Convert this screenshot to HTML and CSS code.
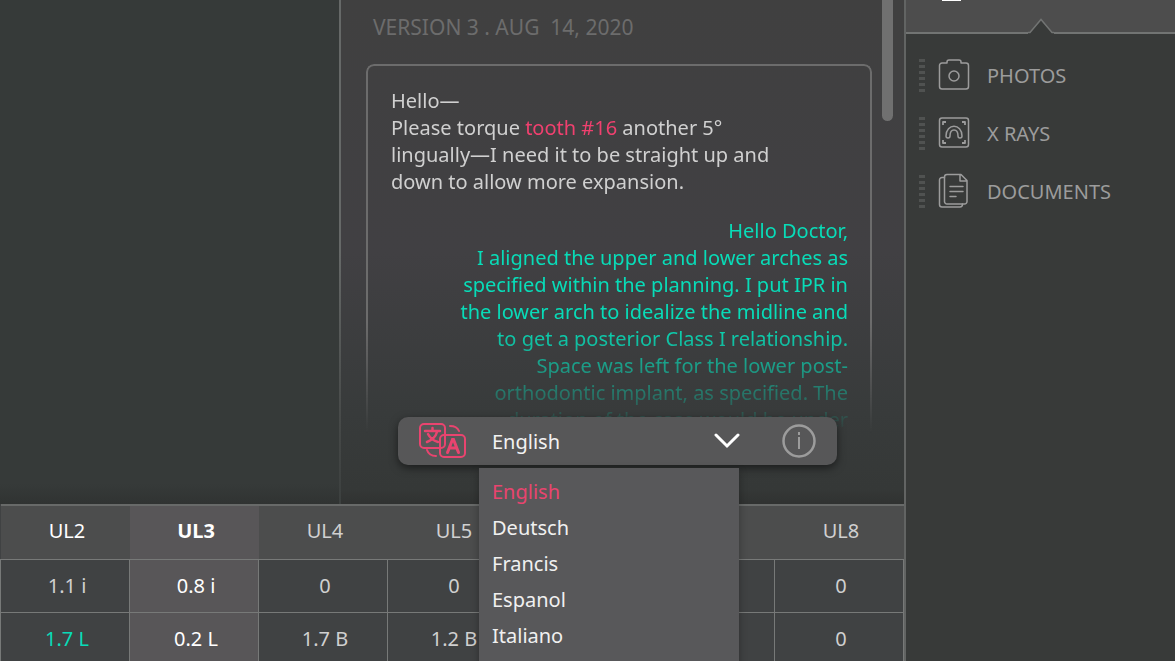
FILE: index.html
```html
<!DOCTYPE html>
<html lang="en">
<head>
  <meta charset="UTF-8" />
  <meta name="viewport" content="width=device-width, initial-scale=1.0"/>
  <title>Treatment Planning</title>
  <link rel="stylesheet" href="styles.css">
</head>
<body>

  <main class="main">
    <div class="workspace">
      <div class="viewer"></div>

      <section class="notes">
        <div class="notes-body">
          <h2>VERSION 3 . AUG &nbsp;14, 2020</h2>
          <div class="thread">
            <p class="message">Hello—<br>
              Please torque <a href="#tooth16">tooth #16</a> another 5°<br>
              lingually—I need it to be straight up and<br>
              down to allow more expansion.</p>
            <p class="message reply">Hello Doctor,<br>
              I aligned the upper and lower arches as<br>
              specified within the planning. I put IPR in<br>
              the lower arch to idealize the midline and<br>
              to get a posterior Class I relationship.<br>
              Space was left for the lower post-<br>
              orthodontic implant, as specified. The<br>
              duration of the case would be under</p>
          </div>
        </div>
        <div class="scroll-thumb"></div>

        <div class="language-bar">
          <label class="translate-icon" for="language">
            <svg width="48" height="36" viewBox="0 0 48 36" fill="none" stroke="currentColor" stroke-width="2" stroke-linecap="round" aria-hidden="true">
              <path d="M20 25H5a4 4 0 0 1-4-4V5a4 4 0 0 1 4-4h17a4 4 0 0 1 4 4v7"/>
              <rect x="21" y="12" width="25" height="22" rx="4"/>
              <path d="M26 12v9a4 4 0 0 1-4 4h-2M31 3q7 0 9 5M8 27q2 6 9 6"/>
              <path d="M6 8h15M13.500 5v3M8 19q8-3 10-10M9 11q3 6 10 8" stroke-width="2.500"/>
              <path d="M28.500 29.500l5-13h1l5 13M30.500 25h7" stroke-width="3"/>
            </svg>
          </label>
          <select id="language" aria-label="Language">
            <option>English</option>
            <option>Deutsch</option>
            <option>Francis</option>
            <option>Espanol</option>
            <option>Italiano</option>
          </select>
          <svg class="chevron" width="26" height="16" viewBox="0 0 26 16" fill="none" stroke="currentColor" stroke-width="3" stroke-linecap="round" aria-hidden="true">
            <path d="M2 2l11 11L24 2"/>
          </svg>
          <button class="info" aria-label="Information">
            <svg width="34" height="34" viewBox="0 0 34 34" fill="none" stroke="currentColor" stroke-width="2">
              <circle cx="17" cy="17" r="15.500" stroke-width="2.500"/>
              <path d="M17 13v12M17 8v3"/>
            </svg>
          </button>

          <ul class="language-menu" id="languageMenu">
            <li><button class="selected">English</button></li>
            <li><button>Deutsch</button></li>
            <li><button>Francis</button></li>
            <li><button>Espanol</button></li>
            <li><button>Italiano</button></li>
          </ul>
        </div>
      </section>
    </div>

    <table class="teeth">
      <thead>
        <tr>
          <th class="bright">UL2</th>
          <th class="active">UL3</th>
          <th>UL4</th>
          <th>UL5</th>
          <th></th>
          <th></th>
          <th>UL8</th>
        </tr>
      </thead>
      <tbody>
        <tr>
          <td>1.1 i</td>
          <td class="active">0.8 i</td>
          <td>0</td>
          <td>0</td>
          <td></td>
          <td></td>
          <td>0</td>
        </tr>
        <tr>
          <td class="changed">1.7 L</td>
          <td class="active">0.2 L</td>
          <td>1.7 B</td>
          <td>1.2 B</td>
          <td></td>
          <td></td>
          <td>0</td>
        </tr>
      </tbody>
    </table>
  </main>

  <aside class="sidebar">
    <div class="sidebar-top">
      <div class="tab-mark"></div>
      <svg class="notch" width="26" height="16" viewBox="0 0 26 16" aria-hidden="true">
        <path d="M0 16V14.500H2L13 1.500L24 14.500H26V16Z" fill="#383a39"/>
        <path d="M0 14.500H2L13 1.500L24 14.500H26" fill="none" stroke="#727473" stroke-width="1.500"/>
      </svg>
    </div>
    <nav class="files">
      <a href="#photos">
        <span class="grip"></span>
        <svg width="32" height="36" viewBox="0 0 32 36" fill="none" stroke="currentColor" stroke-width="1.500" stroke-linejoin="round">
          <path d="M9 6V5a2 2 0 0 1 2-2h10a2 2 0 0 1 2 2v1h5a2.500 2.500 0 0 1 2.500 2.500v21A2.500 2.500 0 0 1 28 32H4a2.500 2.500 0 0 1-2.500-2.500v-21A2.500 2.500 0 0 1 4 6z"/>
          <circle cx="16" cy="19" r="5"/>
        </svg>
        PHOTOS
      </a>
      <a href="#xrays">
        <span class="grip"></span>
        <svg width="32" height="36" viewBox="0 0 32 36" fill="none" stroke="currentColor" stroke-width="1.500" stroke-linejoin="round">
          <rect x="1.500" y="3" width="29" height="29" rx="2.500"/>
          <path d="M5 10V7h3M24 7h3v3M27 25v3h-3M8 28H5v-3" stroke-width="1.800"/>
          <path d="M8 21C8 8 24 8 24 21q0 2-2 2t-2-2C20 13 12 13 12 21q0 2-2 2t-2-2z"/>
        </svg>
        X RAYS
      </a>
      <a href="#documents">
        <span class="grip"></span>
        <svg width="32" height="36" viewBox="0 0 32 36" fill="none" stroke="currentColor" stroke-width="1.500" stroke-linejoin="round" stroke-linecap="round">
          <path d="M9 1.500h14l6 6v21A2.500 2.500 0 0 1 26.500 31H9a2.500 2.500 0 0 1-2.500-2.500V4A2.500 2.500 0 0 1 9 1.500zM22 1.500V8h7"/>
          <path d="M6.500 4.500H4A2.500 2.500 0 0 0 1.500 7v24.500A2.500 2.500 0 0 0 4 34h18q2.500 0 2.500-3"/>
          <path d="M12 13.500h13M12 18.500h13M12 23.500h6"/>
        </svg>
        DOCUMENTS
      </a>
    </nav>
  </aside>

  <script>
    const language = document.getElementById("language");
    const items = document.querySelectorAll("#languageMenu button");

    items.forEach(item => {
      item.onclick = () => {
        language.value = item.innerText;
        items.forEach(i => i.classList.toggle("selected", i === item));
      };
    });
  </script>

</body>
</html>
```
FILE: styles.css
```css
* {
  box-sizing: border-box;
}

body {
  display: flex;
  height: 100vh;
  margin: 0;
  overflow: hidden;
  background: #363a39;
  color: #d0d0d0;
  font-family: "Noto Sans", sans-serif;
  font-size: 20px;
  line-height: 27px;
}

button, select {
  font: inherit;
  color: inherit;
  background: none;
  border: none;
  padding: 0;
  cursor: pointer;
}

.main {
  flex: 1;
  min-width: 0;
  display: flex;
  flex-direction: column;
}

.workspace {
  flex: 1;
  min-height: 0;
  display: grid;
  grid-template-columns: 3fr 5fr;
  background: linear-gradient(#363a39 96%, #303332);
}

.notes {
  position: relative;
  display: flex;
  align-items: flex-start;
  gap: 10px;
  padding: 0 11px 0 25px;
  border-left: 2px solid;
  border-image: linear-gradient(#666968 50%, #454847 85%, #3c403f) 1;
  background: linear-gradient(#404040, #414043 50%, #383b3b 82%, #353837 97%, #303231);
}

.notes-body {
  flex: 1;
  min-width: 0;
}

.notes h2 {
  margin: 14px 0 23px 7px;
  color: #6c6c6c;
  font-size: 21px;
  font-weight: normal;
  line-height: 27px;
}

.thread {
  padding: 21px 22px 0 23px;
  border: 2px solid #6c6c6c;
  border-bottom: none;
  border-radius: 8px 8px 0 0;
  -webkit-mask-image: linear-gradient(#000 70%, transparent);
  mask-image: linear-gradient(#000 70%, transparent);
}

.message {
  margin: 0 0 22px;
  white-space: nowrap;
}

.message a {
  color: #f0406f;
  text-decoration: none;
}

.reply {
  margin: 0;
  color: #08dcb8;
  text-align: right;
}

.scroll-thumb {
  width: 11px;
  height: 121px;
  border-radius: 0 0 6px 6px;
  background: #707070;
}

.language-bar {
  position: absolute;
  left: 57px;
  right: 67px;
  bottom: 39px;
  z-index: 1;
  display: flex;
  align-items: center;
  height: 48px;
  padding: 0 21px;
  border-radius: 10px;
  background: #575758;
  box-shadow: 0 3px 8px rgba(0,0,0,0.5);
}

.translate-icon {
  display: flex;
  color: #e9446f;
}

.language-bar select {
  flex: 1;
  align-self: stretch;
  margin-left: 25px;
  color: #f2f2f2;
  appearance: none;
  outline: none;
}

.chevron {
  color: #fff;
}

.info {
  display: flex;
  margin-left: 42px;
  color: #9c9c9c;
}

.language-menu {
  position: absolute;
  top: 100%;
  left: 81px;
  width: 260px;
  margin: 3px 0 0;
  padding: 5px 0 20px;
  list-style: none;
  background: #58585a;
  box-shadow: 0 3px 8px rgba(0,0,0,0.3);
}

.language-menu button {
  width: 100%;
  height: 36px;
  padding: 0 13px;
  display: block;
  color: #f0f0f0;
  text-align: left;
}

.language-menu .selected {
  color: #e9446f;
}

.teeth {
  width: 100%;
  table-layout: fixed;
  border-collapse: collapse;
  border-top: 2px solid #686a69;
  background: #404243;
}

.teeth th {
  padding: 11px 0 15px 4px;
  background: #4c4d4d;
  font-weight: normal;
}

.teeth td {
  padding: 12px 0 13px 4px;
  border: 1px solid #777978;
  text-align: center;
}

.teeth tr:last-child td {
  padding-bottom: 9px;
  border-bottom: none;
}

.teeth .bright {
  color: #fff;
}

.teeth .active {
  background: #585658;
  color: #fff;
}

.teeth th.active {
  font-weight: bold;
}

.teeth .changed {
  color: #08dcb8;
}

.sidebar {
  width: 271px;
  border-left: 2px solid #626463;
  background: #383a39;
}

.sidebar-top {
  position: relative;
  height: 34px;
  border-bottom: 2px solid #727473;
  background: #4d4d4d;
}

.tab-mark {
  width: 19px;
  height: 1px;
  margin-left: 36px;
  background: #fff;
}

.notch {
  position: absolute;
  left: 50%;
  bottom: -2px;
  transform: translateX(-50%);
}

.files {
  display: flex;
  flex-direction: column;
  gap: 22px;
  padding: 23px 13px;
}

.files a {
  display: flex;
  align-items: center;
  color: #9c9c9c;
  text-decoration: none;
}

.files svg {
  margin: 0 17px 0 13px;
}

.grip {
  width: 6px;
  height: 33px;
  background: repeating-linear-gradient(#505251 0 3px, transparent 3px 6px);
}
```
